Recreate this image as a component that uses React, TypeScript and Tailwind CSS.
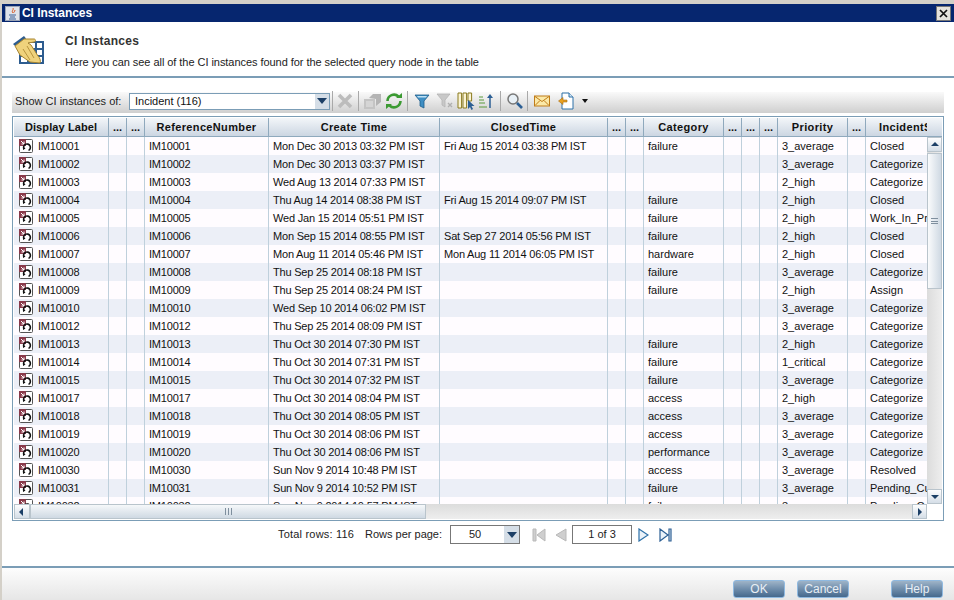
import { ReactNode } from "react";

const rows = [
  ["IM10001", "Mon Dec 30 2013 03:32 PM IST", "Fri Aug 15 2014 03:38 PM IST", "failure", "3_average", "Closed"],
  ["IM10002", "Mon Dec 30 2013 03:37 PM IST", "", "", "3_average", "Categorize"],
  ["IM10003", "Wed Aug 13 2014 07:33 PM IST", "", "", "2_high", "Categorize"],
  ["IM10004", "Thu Aug 14 2014 08:38 PM IST", "Fri Aug 15 2014 09:07 PM IST", "failure", "2_high", "Closed"],
  ["IM10005", "Wed Jan 15 2014 05:51 PM IST", "", "failure", "2_high", "Work_In_Progress"],
  ["IM10006", "Mon Sep 15 2014 08:55 PM IST", "Sat Sep 27 2014 05:56 PM IST", "failure", "2_high", "Closed"],
  ["IM10007", "Mon Aug 11 2014 05:46 PM IST", "Mon Aug 11 2014 06:05 PM IST", "hardware", "2_high", "Closed"],
  ["IM10008", "Thu Sep 25 2014 08:18 PM IST", "", "failure", "3_average", "Categorize"],
  ["IM10009", "Thu Sep 25 2014 08:24 PM IST", "", "failure", "2_high", "Assign"],
  ["IM10010", "Wed Sep 10 2014 06:02 PM IST", "", "", "3_average", "Categorize"],
  ["IM10012", "Thu Sep 25 2014 08:09 PM IST", "", "", "3_average", "Categorize"],
  ["IM10013", "Thu Oct 30 2014 07:30 PM IST", "", "failure", "2_high", "Categorize"],
  ["IM10014", "Thu Oct 30 2014 07:31 PM IST", "", "failure", "1_critical", "Categorize"],
  ["IM10015", "Thu Oct 30 2014 07:32 PM IST", "", "failure", "3_average", "Categorize"],
  ["IM10017", "Thu Oct 30 2014 08:04 PM IST", "", "access", "2_high", "Categorize"],
  ["IM10018", "Thu Oct 30 2014 08:05 PM IST", "", "access", "3_average", "Categorize"],
  ["IM10019", "Thu Oct 30 2014 08:06 PM IST", "", "access", "3_average", "Categorize"],
  ["IM10020", "Thu Oct 30 2014 08:06 PM IST", "", "performance", "3_average", "Categorize"],
  ["IM10030", "Sun Nov 9 2014 10:48 PM IST", "", "access", "3_average", "Resolved"],
  ["IM10031", "Sun Nov 9 2014 10:52 PM IST", "", "failure", "3_average", "Pending_Customer"],
  ["IM10032", "Sun Nov 9 2014 10:57 PM IST", "", "failure", "3_average", "Pending_Customer"],
];

function HeadCell({ className, children }: { className: string; children: ReactNode }) {
  return (
    <div
      className={`flex shrink-0 items-center justify-center overflow-hidden whitespace-nowrap border-r border-[#8fa9bd] font-bold text-[#111] ${className}`}
    >
      {children}
    </div>
  );
}

function Cell({ className, children }: { className: string; children?: ReactNode }) {
  return (
    <div
      className={`flex shrink-0 items-center overflow-hidden whitespace-nowrap border-r border-[#bfd0dc] pl-[4px] ${className}`}
    >
      {children}
    </div>
  );
}

function RowIcon() {
  return (
    <svg width="16" height="16" viewBox="0 0 16 16" className="shrink-0">
      <rect x="1.5" y="1.5" width="13" height="13" rx="1" fill="#fff" stroke="#555" />
      <rect x="1" y="1" width="7" height="7" fill="#8a3a4a" />
      <path d="M3 3l3 3M6 3.5V6H3.5" stroke="#fff" strokeWidth="1" fill="none" />
      <path d="M6 11a3.4 3.4 0 1 1 4.5 1.4" stroke="#111" strokeWidth="1.6" fill="none" />
      <path d="M5 8.5l2.5 2-2.5 1.5z" fill="#111" />
    </svg>
  );
}

function Sep() {
  return <div className="mx-[4px] h-[20px] w-px bg-[#a9a9a9]" />;
}

function ScrollButton({ dir, className }: { dir: "up" | "down" | "left" | "right"; className: string }) {
  const pts = {
    up: "1,6 5,2 9,6",
    down: "1,3 9,3 5,7",
    left: "6,1 6,9 2,5",
    right: "3,1 3,9 7,5",
  }[dir];
  return (
    <div
      className={`flex shrink-0 items-center justify-center border border-[#b9c4cc] bg-gradient-to-b from-[#fdfdfe] to-[#d5dee7] ${className}`}
    >
      <svg width="10" height="10" viewBox="0 0 10 10">
        <polygon points={pts} fill="#1c3f66" />
      </svg>
    </div>
  );
}

function FooterButton({ label }: { label: string }) {
  return (
    <div className="flex h-[18px] w-[52px] items-center justify-center rounded-[3px] border border-[#8fb9e0] bg-gradient-to-b from-[#9fb4c8] via-[#6f8dab] to-[#46698d] text-[12px] text-[#e8eef4]">
      {label}
    </div>
  );
}

export default function App() {
  return (
    <div className="flex h-[600px] w-[954px] flex-col overflow-hidden border-l-2 border-t-[4px] border-[#d4d0c8] bg-white font-['Liberation_Sans',sans-serif] text-[11px] text-[#111]">
      {/* title bar */}
      <div className="flex h-[18px] shrink-0 items-center justify-between bg-[#06266f] pl-[3px] pr-[3px]">
        <div className="flex items-center gap-[2px]">
          <div className="flex size-[15px] items-center justify-center border border-[#9aa3b5] bg-[#dfe3ea]">
            <svg width="12" height="13" viewBox="0 0 12 13">
              <path d="M6 1c1 2-2 3 0 5M8 3c0 2-2 2-1 3" stroke="#d8541e" strokeWidth="1" fill="none" />
              <path d="M2 8h7M3 10h5M2 12h7" stroke="#3a5f96" strokeWidth="1" />
            </svg>
          </div>
          <span className="text-[12px] font-bold tracking-[-0.05px] text-white">CI Instances</span>
        </div>
        <div className="flex size-[15px] items-center justify-center border border-[#777] bg-[#e4e2dc]">
          <svg width="9" height="9" viewBox="0 0 9 9">
            <path d="M1 1l7 7M8 1L1 8" stroke="#111" strokeWidth="1.7" />
          </svg>
        </div>
      </div>

      {/* header */}
      <div className="flex h-[56px] shrink-0 border-b-2 border-[#7b9db6] pl-[10px]">
        <svg width="32" height="32" viewBox="0 0 32 32" className="mt-[12px] shrink-0">
          <path d="M8 8h23v21H8z" fill="#fff" />
          <path d="M8 8h23v21H8zM8 15h23M8 22h23M16 8v21M24 8v21" stroke="#2d5c8f" strokeWidth="2" fill="none" />
          <path d="M1 10l11-8 2 2.500L3 12z" fill="#2d5c8f" />
          <path
            d="M3 12l9-7h10c2 0 2 3 0 3l-6 1 3 2 7 11c2 2 3 5 2 7l-10-1-10-7z"
            fill="#efd27c"
            stroke="#a8842e"
            strokeWidth="1"
          />
          <path d="M15 12l7 12M11 15l7 11" stroke="#a8842e" strokeWidth="0.8" fill="none" />
        </svg>
        <div className="ml-[21px] flex flex-col">
          <div className="mt-[11px] text-[12px] font-bold leading-[16px] tracking-[0.3px] text-[#333]">CI Instances</div>
          <div className="mt-[6px] leading-[14px] tracking-[-0.05px] text-[#222]">
            Here you can see all of the CI instances found for the selected query node in the table
          </div>
        </div>
      </div>

      <div className="flex min-h-0 flex-1 flex-col px-[10px] pt-[14px]">
        {/* toolbar */}
        <div className="flex h-[21px] shrink-0 items-center bg-gradient-to-b from-[#fafafa] to-[#cfcfcf] pb-[3px] pl-[3px]">
          <span className="w-[114px] shrink-0 text-[#222]">Show CI instances of:</span>
          <div className="flex h-[17px] w-[201px] items-center justify-between border border-[#7b9db6] bg-white pl-[5px]">
            <span>Incident (116)</span>
            <div className="flex h-full w-[14px] items-center justify-center bg-[#d5dee7]">
              <svg width="10" height="6" viewBox="0 0 10 6">
                <polygon points="0,0 10,0 5,6" fill="#1c3f66" />
              </svg>
            </div>
          </div>
          <div className="ml-[2px] h-[20px] w-px bg-[#a9a9a9]" />
          <svg width="18" height="18" viewBox="0 0 18 18" className="ml-[3px]">
            <path d="M3 3l12 12M15 3L3 15" stroke="#bcbcbc" strokeWidth="3.6" />
          </svg>
          <Sep />
          <svg width="20" height="18" viewBox="0 0 20 18">
            <path d="M1 7h11v10H1z" fill="#c4c4c4" />
            <path d="M6 6l4-4h8v8l-5 4V7z" fill="#b4b4b4" />
            <path d="M3 10h7M3 12h7M3 14h7" stroke="#e6e6e6" />
          </svg>
          <svg width="18" height="18" viewBox="0 0 18 18" className="ml-[2px]">
            <path d="M2.5 9a6.5 6.5 0 0 1 11-4.500" stroke="#3b9a32" strokeWidth="2.600" fill="none" />
            <path d="M15.500 9a6.500 6.500 0 0 1-11 4.500" stroke="#3b9a32" strokeWidth="2.600" fill="none" />
            <path d="M11 6h6V1zM7 12H1v5z" fill="#3b9a32" />
          </svg>
          <Sep />
          <svg width="16" height="16" viewBox="0 0 16 16" className="ml-[2px]">
            <path d="M1 2h14l-5 6v7l-4-2V8z" fill="#3f8fc4" stroke="#1f5e8c" strokeWidth="0.8" />
            <path d="M3 3h10l-1 1.500H4z" fill="#bfe1f5" />
          </svg>
          <svg width="18" height="18" viewBox="0 0 18 18" className="ml-[6px]">
            <path d="M1 2h13l-5 6v7l-3-2V8z" fill="#c8c8c8" stroke="#b4b4b4" strokeWidth="0.8" />
            <path d="M12 11l4 4M16 11l-4 4" stroke="#b0b0b0" strokeWidth="1.400" />
          </svg>
          <svg width="18" height="18" viewBox="0 0 18 18" className="ml-[3px]">
            <path d="M1 1h3.600v15H1zM6 1h3.600v15H6zM11 1h3.600v8H11z" fill="#fbf4d4" stroke="#8a7a1e" strokeWidth="1" />
            <path d="M11 8l0 9 2-2 1.500 3 1.500-1-1.500-3h3z" fill="#2c5f94" />
          </svg>
          <svg width="18" height="18" viewBox="0 0 18 18" className="ml-[3px]">
            <path d="M1 5h4M1 8h5M1 11h6M1 15h8" stroke="#5b9a3a" strokeWidth="1" />
            <path d="M12 16V4" stroke="#2c5f94" strokeWidth="1.500" />
            <path d="M9 6l3-4 3 4z" fill="#2c5f94" />
          </svg>
          <Sep />
          <svg width="17" height="18" viewBox="0 0 17 18" className="ml-[1px]">
            <circle cx="7" cy="7" r="5" fill="#e8f0f6" stroke="#777" strokeWidth="1.500" />
            <path d="M11 11l5 5" stroke="#2c5f94" strokeWidth="2.600" />
          </svg>
          <Sep />
          <svg width="18" height="16" viewBox="0 0 18 16" className="ml-[1px]">
            <rect x="1.500" y="3" width="15" height="10" fill="#fbe9a8" stroke="#c07c18" />
            <path d="M2 3.500l7 5 7-5M2 12.500l5-5M16 12.500l-5-5" stroke="#c07c18" fill="none" />
          </svg>
          <svg width="18" height="18" viewBox="0 0 18 18" className="ml-[6px]">
            <path d="M5 1h7l4 4v12H5z" fill="#fff" stroke="#2c70a8" />
            <path d="M12 1v4h4" fill="#d5e6f3" stroke="#2c70a8" />
            <path d="M1 8h4V5.500L9.500 9 5 12.500V10H1z" transform="matrix(-1 0 0 1 11 0)" fill="#e8a020" stroke="#a86c10" strokeWidth="0.600" />
          </svg>
          <svg width="6" height="4" viewBox="0 0 6 4" className="ml-[7px]">
            <polygon points="0,0 6,0 3,4" fill="#111" />
          </svg>
        </div>

        {/* table */}
        <div className="mt-[3px] flex h-[405px] w-[932px] shrink-0 flex-col border border-[#7b9db6] bg-white p-[1px]">
          <div className="flex h-[19px] shrink-0 border-b border-[#8fa9bd] bg-gradient-to-b from-[#f3f6f9] to-[#ccd6e2]">
            <HeadCell className="w-[95px] tracking-[0.1px]">Display Label</HeadCell>
            <HeadCell className="w-[18px]">...</HeadCell>
            <HeadCell className="w-[18px]">...</HeadCell>
            <HeadCell className="w-[124px] tracking-[0.35px]">ReferenceNumber</HeadCell>
            <HeadCell className="w-[171px] tracking-[0.35px]">Create Time</HeadCell>
            <HeadCell className="w-[168px] tracking-[0.35px]">ClosedTime</HeadCell>
            <HeadCell className="w-[18px]">...</HeadCell>
            <HeadCell className="w-[18px]">...</HeadCell>
            <HeadCell className="w-[80px] tracking-[0.35px]">Category</HeadCell>
            <HeadCell className="w-[18px]">...</HeadCell>
            <HeadCell className="w-[18px]">...</HeadCell>
            <HeadCell className="w-[18px]">...</HeadCell>
            <HeadCell className="w-[70px] tracking-[0.35px]">Priority</HeadCell>
            <HeadCell className="w-[18px]">...</HeadCell>
            <div className="w-[61px] shrink-0 self-center overflow-hidden whitespace-nowrap pl-[13px] font-bold tracking-[0.35px]">
              IncidentStatus
            </div>
          </div>
          <div className="flex min-h-0 flex-1">
            <div className="h-[368px] w-[913px] shrink-0 overflow-hidden">
              {rows.map((row, i) => (
                <div key={row[0]} className={`flex h-[18px] ${i % 2 ? "bg-[#eceff7]" : "bg-[#fffcff]"}`}>
                  <Cell className="w-[95px] gap-[4px] tracking-[-0.2px]">
                    <RowIcon />
                    <span>{row[0]}</span>
                  </Cell>
                  <Cell className="w-[18px]" />
                  <Cell className="w-[18px]" />
                  <Cell className="w-[124px] tracking-[-0.2px]">{row[0]}</Cell>
                  <Cell className="w-[171px] tracking-[-0.2px]">{row[1]}</Cell>
                  <Cell className="w-[168px] tracking-[-0.2px]">{row[2]}</Cell>
                  <Cell className="w-[18px]" />
                  <Cell className="w-[18px]" />
                  <Cell className="w-[80px]">{row[3]}</Cell>
                  <Cell className="w-[18px]" />
                  <Cell className="w-[18px]" />
                  <Cell className="w-[18px]" />
                  <Cell className="w-[70px]">{row[4]}</Cell>
                  <Cell className="w-[18px]" />
                  <div className="flex min-w-0 flex-1 items-center overflow-hidden whitespace-nowrap pl-[4px]">{row[5]}</div>
                </div>
              ))}
            </div>
            {/* vertical scrollbar */}
            <div className="flex w-[15px] shrink-0 flex-col bg-gradient-to-r from-[#dcdcdc] to-[#eeeeee]">
              <ScrollButton dir="up" className="h-[15px]" />
              <div className="mt-[1px] flex h-[136px] items-center justify-center border border-[#b9c4cc] bg-gradient-to-r from-[#fafbfc] to-[#cfd9e3]">
                <div className="h-[6px] w-[7px] border-y border-[#7f8f9e] bg-[linear-gradient(#7f8f9e,#7f8f9e)] bg-[length:100%_1px] bg-center bg-no-repeat" />
              </div>
              <div className="flex-1" />
              <ScrollButton dir="down" className="h-[15px]" />
            </div>
          </div>
          {/* horizontal scrollbar */}
          <div className="flex h-[15px] shrink-0">
            <div className="flex w-[913px] shrink-0 bg-gradient-to-b from-[#dcdcdc] to-[#eeeeee]">
              <ScrollButton dir="left" className="w-[16px]" />
              <div className="flex w-[396px] items-center justify-center border border-[#b9c4cc] bg-gradient-to-b from-[#f6f8fa] to-[#cfd9e3]">
                <div className="h-[7px] w-[7px] border-x border-[#7f8f9e] bg-[linear-gradient(#7f8f9e,#7f8f9e)] bg-[length:1px_100%] bg-center bg-no-repeat" />
              </div>
              <div className="flex-1" />
              <ScrollButton dir="right" className="w-[15px]" />
            </div>
          </div>
        </div>

        {/* pagination */}
        <div className="mt-[4px] flex h-[19px] shrink-0 items-center pl-[266px] text-[#222]">
          <span className="w-[87px] tracking-[0.2px]">Total rows: 116</span>
          <span className="w-[85px]">Rows per page:</span>
          <div className="flex h-[19px] w-[70px] items-center justify-between border border-[#777] bg-white">
            <span className="ml-[18px]">50</span>
            <div className="flex h-full w-[15px] items-center justify-center bg-[#d5dee7]">
              <svg width="10" height="6" viewBox="0 0 10 6">
                <polygon points="0,0 10,0 5,6" fill="#1c3f66" />
              </svg>
            </div>
          </div>
          <svg width="14" height="14" viewBox="0 0 14 14" className="ml-[12px]">
            <path d="M1 1h3v12H1zM13 1v12L5 7z" fill="#cfcfcf" stroke="#b9b9b9" />
          </svg>
          <svg width="13" height="14" viewBox="0 0 13 14" className="ml-[8px]">
            <path d="M12 1v12L2 7z" fill="#cfcfcf" stroke="#b9b9b9" />
          </svg>
          <div className="ml-[5px] flex h-[19px] w-[60px] items-center justify-center border border-[#777]">1 of 3</div>
          <svg width="11" height="14" viewBox="0 0 11 14" className="ml-[6px]">
            <path d="M1 1v12l9-6z" fill="#eaf2f9" stroke="#2c70a8" strokeWidth="1.200" />
          </svg>
          <svg width="13" height="14" viewBox="0 0 13 14" className="ml-[10px]">
            <path d="M1 1v12l8-6zM10 1h2v12h-2z" fill="#eaf2f9" stroke="#2c5f94" strokeWidth="1.200" />
          </svg>
        </div>

        <div className="flex-1" />
      </div>

      {/* footer */}
      <div className="flex h-[34px] shrink-0 justify-end border-t-2 border-[#7b9db6] bg-gradient-to-b from-[#fdfdfd] to-[#e6e6e6] pr-[11px] pt-[12px]">
        <FooterButton label="OK" />
        <div className="ml-[12px]">
          <FooterButton label="Cancel" />
        </div>
        <div className="ml-[42px]">
          <FooterButton label="Help" />
        </div>
      </div>
    </div>
  );
}
